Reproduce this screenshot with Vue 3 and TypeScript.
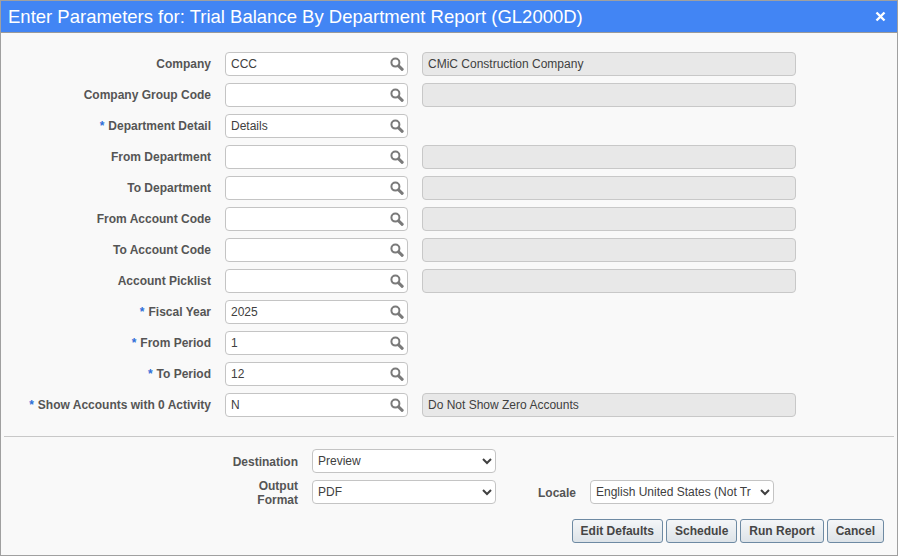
<script setup lang="ts">
interface Row { label: string; value: string; req?: boolean; desc?: string | null }
const rows: Row[] = [
  { label: 'Company', value: 'CCC', desc: 'CMiC Construction Company' },
  { label: 'Company Group Code', value: '', desc: '' },
  { label: 'Department Detail', value: 'Details', req: true, desc: null },
  { label: 'From Department', value: '', desc: '' },
  { label: 'To Department', value: '', desc: '' },
  { label: 'From Account Code', value: '', desc: '' },
  { label: 'To Account Code', value: '', desc: '' },
  { label: 'Account Picklist', value: '', desc: '' },
  { label: 'Fiscal Year', value: '2025', req: true, desc: null },
  { label: 'From Period', value: '1', req: true, desc: null },
  { label: 'To Period', value: '12', req: true, desc: null },
  { label: 'Show Accounts with 0 Activity', value: 'N', req: true, desc: 'Do Not Show Zero Accounts' },
]
const buttons = ['Edit Defaults', 'Schedule', 'Run Report', 'Cancel']
</script>

<template>
  <div class="window">
    <header class="titlebar">
      <span class="title">Enter Parameters for: Trial Balance By Department Report (GL2000D)</span>
      <svg class="close" width="11" height="11" viewBox="0 0 11 11" aria-label="Close">
        <path d="M1.5 1.5 L9.5 9.5 M9.5 1.5 L1.5 9.5" stroke="#fff" stroke-width="2.4" fill="none" />
      </svg>
    </header>

    <div class="form">
      <div v-for="row in rows" :key="row.label" class="row">
        <label class="label"><span v-if="row.req" class="req">*</span>{{ row.label }}</label>
        <div class="lookup">
          <input class="lookup-input" type="text" :value="row.value" />
          <svg class="search" width="14" height="14" viewBox="0 0 14 14">
            <circle cx="5.4" cy="5.6" r="4" fill="none" stroke="#7a7a7a" stroke-width="2" />
            <path d="M8.6 8.8 L12.2 12.3" stroke="#7a7a7a" stroke-width="3" stroke-linecap="round" />
          </svg>
        </div>
        <div v-if="row.desc !== null" class="desc">{{ row.desc }}</div>
      </div>
    </div>

    <hr class="divider" />

    <div class="output">
      <div class="out-row">
        <label class="out-label">Destination</label>
        <select class="sel"><option>Preview</option></select>
      </div>
      <div class="out-row">
        <label class="out-label">Output<br />Format</label>
        <select class="sel"><option>PDF</option></select>
        <label class="locale-label">Locale</label>
        <select class="sel sel-locale"><option>English United States (Not Translated)</option></select>
      </div>
    </div>

    <div class="actions">
      <button v-for="b in buttons" :key="b" class="btn" type="button">{{ b }}</button>
    </div>
  </div>
</template>

<style>
html, body { margin: 0; padding: 0; background: #f9f9f9; }
</style>

<style scoped>
.window {
  box-sizing: border-box;
  width: 898px;
  height: 556px;
  border: 1px solid #a0a0a0;
  background: #f9f9f9;
  font-family: "Liberation Sans", Arial, sans-serif;
  display: flex;
  flex-direction: column;
  overflow: hidden;
}
.titlebar {
  height: 31px;
  flex: none;
  background: #4285f4;
  border-bottom: 1px solid #9a9a9a;
  display: flex;
  align-items: center;
  justify-content: space-between;
  padding: 0 11px 0 7px;
  color: #fff;
}
.title { font-size: 18.5px; line-height: 30px; }
.close { flex: none; }
.form {
  padding-top: 19px;
  display: flex;
  flex-direction: column;
  gap: 7px;
}
.row {
  display: flex;
  align-items: center;
  height: 24px;
}
.label {
  width: 210px;
  flex: none;
  text-align: right;
  font-size: 12px;
  font-weight: 700;
  color: #555;
}
.req { color: #2f6fd8; margin-right: 4px; }
.lookup {
  position: relative;
  margin-left: 14px;
  width: 183px;
  height: 24px;
  flex: none;
}
.lookup-input {
  box-sizing: border-box;
  width: 100%;
  height: 100%;
  border: 1px solid #c4c4c4;
  border-radius: 4px;
  background: #fff;
  padding: 0 24px 0 5px;
  font: 12px "Liberation Sans", Arial, sans-serif;
  color: #404040;
  outline: none;
}
.search { position: absolute; right: 4px; top: 5px; }
.desc {
  box-sizing: border-box;
  margin-left: 14px;
  width: 374px;
  height: 24px;
  flex: none;
  border: 1px solid #c8c8c8;
  border-radius: 4px;
  background: #e8e8e8;
  padding: 0 5px;
  font-size: 12px;
  line-height: 22px;
  color: #404040;
}
.divider {
  margin: 19px 3px 0;
  border: 0;
  border-top: 1px solid #c8c8c8;
  height: 0;
  flex: none;
}
.output {
  margin-top: 12px;
  display: flex;
  flex-direction: column;
  gap: 7px;
}
.out-row {
  display: flex;
  align-items: center;
  height: 24px;
}
.out-label {
  width: 297px;
  flex: none;
  padding-top: 2px;
  text-align: right;
  font-size: 12px;
  font-weight: 700;
  line-height: 14px;
  color: #555;
}
.sel {
  box-sizing: border-box;
  margin-left: 14px;
  width: 184px;
  height: 24px;
  flex: none;
  border: 1px solid #c4c4c4;
  border-radius: 4px;
  background: #fff;
  padding: 0 0 0 1px;
  font: 12px "Liberation Sans", Arial, sans-serif;
  color: #404040;
  outline: none;
}
.locale-label {
  margin-left: 42px;
  padding-top: 2px;
  width: 38px;
  flex: none;
  font-size: 12px;
  font-weight: 700;
  color: #555;
}
.sel-locale { padding-right: 6px; }
.actions {
  margin-top: 15px;
  display: flex;
  justify-content: flex-end;
  gap: 3px;
  padding-right: 13px;
}
.btn {
  box-sizing: border-box;
  height: 24px;
  padding: 0 8px;
  border: 1px solid #6e8aa3;
  border-radius: 3px;
  background: linear-gradient(#f4f6f8, #dde3e8);
  font: 700 12px "Liberation Sans", Arial, sans-serif;
  color: #454545;
}
</style>
